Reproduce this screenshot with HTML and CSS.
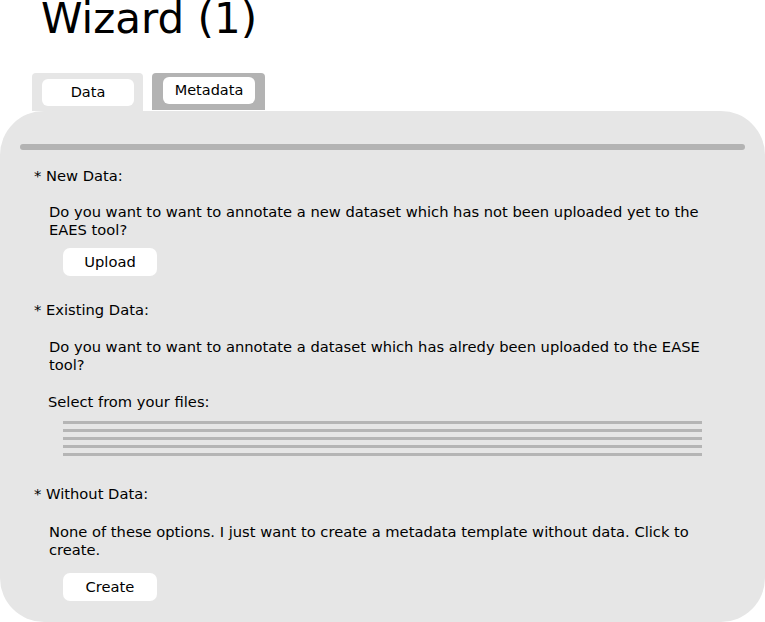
FILE: index.html
```html
<!DOCTYPE html>
<html lang="en">
<head>
<meta charset="utf-8">
<title>Wizard (1)</title>
<link rel="stylesheet" href="styles.css">
</head>
<body>
<h1 class="title">Wizard (1)</h1>
<div class="tabs">
  <div class="tab tab-active"><span class="tab-label">Data</span></div>
  <div class="tab tab-inactive"><span class="tab-label">Metadata</span></div>
</div>
<div class="panel">
  <div class="divider"></div>

  <section class="option option-new">
    <div class="option-title">* New Data:</div>
    <p class="option-text">Do you want to want to annotate a new dataset which has not been uploaded yet to the EAES tool?</p>
    <div class="btn btn-upload">Upload</div>
  </section>

  <section class="option option-existing">
    <div class="option-title">* Existing Data:</div>
    <p class="option-text">Do you want to want to annotate a dataset which has alredy been uploaded to the EASE tool?</p>
    <div class="select-label">Select from your files:</div>
    <div class="file-list">
      <div class="file-row"></div>
      <div class="file-row"></div>
      <div class="file-row"></div>
      <div class="file-row"></div>
      <div class="file-row"></div>
    </div>
  </section>

  <section class="option option-without">
    <div class="option-title">* Without Data:</div>
    <p class="option-text">None of these options. I just want to create a metadata template without data. Click to create.</p>
    <div class="btn btn-create">Create</div>
  </section>
</div>
</body>
</html>
```

FILE: styles.css
```css
html, body {
  margin: 0;
  padding: 0;
  background: #ffffff;
}

body {
  font-family: "DejaVu Sans", "Liberation Sans", sans-serif;
  color: #000000;
  overflow: hidden;
}

.title {
  margin: 0;
  padding-left: 41px;
  font-size: 42px;
  font-weight: normal;
  line-height: 37px;
  height: 37px;
}

.tabs {
  display: flex;
  margin-top: 36px;
  padding-left: 32px;
  gap: 9px;
  height: 38px;
  align-items: flex-start;
}

.tab {
  box-sizing: border-box;
  border-radius: 4px 4px 0 0;
}

.tab-active {
  width: 111px;
  height: 38px;
  background: #e6e6e6;
  padding: 6px 9px 0 10px;
}

.tab-inactive {
  width: 113px;
  height: 37px;
  background: #b3b3b3;
  padding: 4px 10px 0 11px;
}

.tab-label {
  display: block;
  height: 27px;
  line-height: 27px;
  background: #ffffff;
  border-radius: 6px;
  text-align: center;
  font-size: 14.5px;
}

.panel {
  background: #e6e6e6;
  border-radius: 44px;
  padding: 33px 35px 21px 34px;
}

.divider {
  height: 6px;
  margin: 0 -15px 0 -14px;
  background: #b3b3b3;
  border-radius: 3px;
}

.option {
  font-size: 14.7px;
  line-height: 17.64px;
}

.option-title {
  margin: 0;
}

.option-new .option-title { margin-top: 17px; }
.option-existing .option-title { margin-top: 25px; }
.option-without .option-title { margin-top: 29.4px; }

.option-text {
  margin: 0;
  padding-left: 15px;
}

.option-new .option-text { margin-top: 18.5px; }
.option-existing .option-text { margin-top: 19.5px; }
.option-without .option-text { margin-top: 20px; }

.select-label {
  margin-top: 19.5px;
  padding-left: 14px;
}

.file-list {
  display: flex;
  flex-direction: column;
  gap: 5px;
  margin-top: 10.6px;
  margin-left: 29px;
  width: 639px;
}

.file-row {
  height: 3px;
  background: #b5b5b5;
}

.btn {
  width: 94px;
  height: 28px;
  line-height: 28px;
  margin-left: 29px;
  background: #ffffff;
  border-radius: 7px;
  text-align: center;
  font-size: 14.7px;
}

.btn-upload { margin-top: 9.5px; }
.btn-create { margin-top: 14.7px; }
```
